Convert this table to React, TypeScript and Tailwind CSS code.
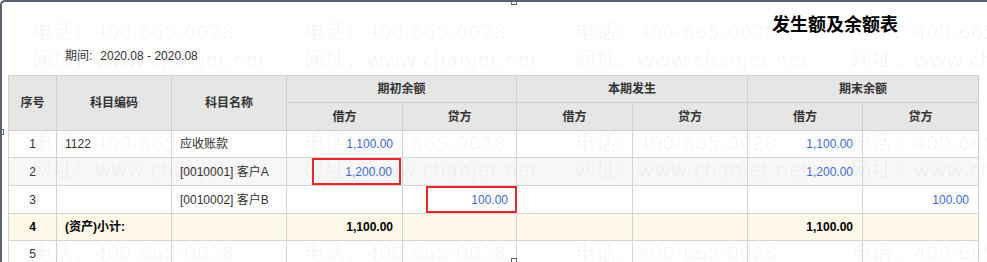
const cols = [48, 115, 115, 116, 114, 116, 115, 115, 116]

type Row = {
  no: string
  code?: string
  name?: string
  vals: (string | null)[]
  total?: boolean
  striped?: boolean
}

const rows: Row[] = [
  { no: '1', code: '1122', name: '应收账款', vals: ['1,100.00', null, null, null, '1,100.00', null] },
  { no: '2', name: '[0010001] 客户A', vals: ['1,200.00', null, null, null, '1,200.00', null], striped: true },
  { no: '3', name: '[0010002] 客户B', vals: [null, '100.00', null, null, null, '100.00'] },
  { no: '4', code: '(资产)小计:', vals: ['1,100.00', null, null, null, '1,100.00', null], total: true },
  { no: '5', vals: [null, null, null, null, null, null] },
]

// watermark grid
const wmX = [30, 302, 573, 849]
const wmLines = [
  { y: 19, text: '电话：400-665-0028' },
  { y: 47, text: '网址：www.chanjet.net' },
  { y: 130, text: '电话：400-665-0028' },
  { y: 157, text: '网址：www.chanjet.net' },
  { y: 240, text: '电话：400-665-0028' },
]

function Watermark() {
  return (
    <div className="pointer-events-none absolute inset-0 z-10 overflow-hidden">
      {wmLines.map((l, i) =>
        wmX.map((x) => (
          <span
            key={`${i}-${x}`}
            className="absolute whitespace-nowrap text-[20px] leading-[22px] tracking-[1px] text-black/[0.05] font-['Open_Sans','Noto_Sans_CJK_SC',sans-serif]"
            style={{ left: x, top: l.y }}
          >
            {l.text}
          </span>
        ))
      )}
    </div>
  )
}

export default function App() {
  return (
    <div className="relative w-[987px] h-[262px] overflow-hidden bg-white border-t-2 border-l-2 border-[#56626f] rounded-tl-[5px] font-['Liberation_Sans','Noto_Sans_CJK_SC',sans-serif] text-[12px] text-[#333]">
      <Watermark />

      {/* selection handles */}
      <div className="absolute left-[509px] -top-[3px] z-20 h-[6px] w-[6px] border border-[#56626f] bg-white" />
      <div className="absolute left-[509px] top-[256px] z-20 h-[6px] w-[6px] border border-[#56626f] bg-white" />
      <div className="absolute -left-[4px] top-[127px] z-20 h-[6px] w-[6px] border border-[#56626f] bg-white" />

      <div className="flex h-[35px] items-end justify-end pr-[89px]">
        <h1 className="text-[18px] leading-[24px] font-bold text-black">发生额及余额表</h1>
      </div>

      <div className="flex h-[38px] items-center pl-[63px] text-[12px] text-[#333]">
        <span>期间:</span>
        <span className="ml-[8px]">2020.08 - 2020.08</span>
      </div>

      <div className="pl-[6px]">
        <table className="table-fixed border-collapse w-[970px]">
          <colgroup>
            {cols.map((w, i) => (
              <col key={i} style={{ width: w }} />
            ))}
          </colgroup>
          <thead>
            <tr className="h-[27px] bg-[#e6e6e6] font-bold">
              <th rowSpan={2} className="border border-[#cfcfcf] text-center">序号</th>
              <th rowSpan={2} className="border border-[#cfcfcf] text-center">科目编码</th>
              <th rowSpan={2} className="border border-[#cfcfcf] text-center">科目名称</th>
              <th colSpan={2} className="border border-[#cfcfcf] text-center">期初余额</th>
              <th colSpan={2} className="border border-[#cfcfcf] text-center">本期发生</th>
              <th colSpan={2} className="border border-[#cfcfcf] text-center">期末余额</th>
            </tr>
            <tr className="h-[28px] bg-[#e6e6e6] font-bold">
              {['借方', '贷方', '借方', '贷方', '借方', '贷方'].map((t, i) => (
                <th key={i} className="border border-[#cfcfcf] text-center">{t}</th>
              ))}
            </tr>
          </thead>
          <tbody>
            {rows.map((r) => (
              <tr
                key={r.no}
                className={`h-[27px] ${r.total ? 'bg-[#fdf8e7] font-bold text-black' : r.striped ? 'bg-[#f7f7f7]' : 'bg-white'}`}
              >
                <td className="border border-[#d4d4d4] text-center">{r.no}</td>
                <td className="border border-[#d4d4d4] px-[8px]">{r.code}</td>
                <td className="border border-[#d4d4d4] px-[8px]">{r.name}</td>
                {r.vals.map((v, i) => {
                  const boxed = (r.no === '2' && i === 0) || (r.no === '3' && i === 1)
                  return (
                    <td key={i} className="border border-[#d4d4d4] p-0 text-right">
                      {v && boxed ? (
                        <div className="flex justify-end">
                          <span
                            className={`flex h-[27px] items-center justify-end border-2 border-[#e8262b] pr-[7px] text-[#3f6ad4] ${i === 0 ? 'w-[89px] mr-[1px]' : 'w-[91px] -mr-[1px]'}`}
                          >
                            {v}
                          </span>
                        </div>
                      ) : (
                        <span className={`pr-[9px] ${r.total ? 'text-black' : 'text-[#3f6ad4]'}`}>{v}</span>
                      )}
                    </td>
                  )
                })}
              </tr>
            ))}
          </tbody>
        </table>
      </div>
    </div>
  )
}
